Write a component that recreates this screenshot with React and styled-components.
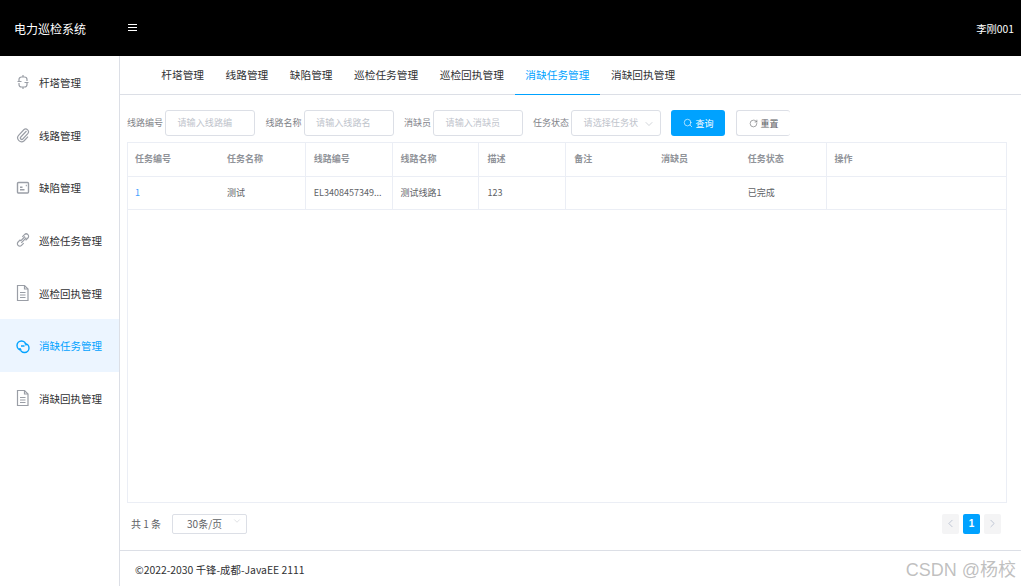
import React from 'react'
import styled, { createGlobalStyle } from 'styled-components'
import { Search, RotateCw, ChevronDown, ChevronLeft, ChevronRight } from 'lucide-react'

const menus = ['杆塔管理', '线路管理', '缺陷管理', '巡检任务管理', '巡检回执管理', '消缺任务管理', '消缺回执管理']
const columns = ['任务编号', '任务名称', '线路编号', '线路名称', '描述', '备注', '消缺员', '任务状态', '操作']
const row = ['1', '测试', 'EL3408457349...', '测试线路1', '123', '', '', '已完成', '']
const dividers = [false, true, true, true, true, false, false, true, false]

function MenuIcon({ index, color }) {
  const props = { width: 14, height: 18, viewBox: '0 0 14 18', fill: 'none', stroke: color, strokeWidth: 1.2 }
  if (index === 0) {
    return (
      <svg {...props}>
        <path d="M7 2v2M3 8V6.500A2.500 2.500 0 0 1 5.500 4h3A2.500 2.500 0 0 1 11 6.500V8M3 10v1.500A2.500 2.500 0 0 0 5.500 14h3a2.500 2.500 0 0 0 2.500-2.500V10M7 14v2M1.500 8.500h4M8.500 9.500h4" />
      </svg>
    )
  }
  if (index === 1) {
    return (
      <svg {...props}>
        <path d="M10.500 5 4.800 11a1.400 1.400 0 0 0 2 2l5-5.300a2.800 2.800 0 0 0-4-3.900L2.600 9.300a3.900 3.900 0 0 0 5.600 5.400l3.800-4" />
      </svg>
    )
  }
  if (index === 2) {
    return (
      <svg {...props} strokeWidth={1.4}>
        <rect x="1.500" y="3.500" width="11" height="10.500" rx="1" />
        <path d="M4 10.800h4.500M4 8.300h2.500M9.800 6.500h1" />
      </svg>
    )
  }
  if (index === 3) {
    return (
      <svg {...props}>
        <path d="M6.300 5.800 8.500 3.600a2.400 2.400 0 0 1 3.400 3.400L9.600 9.300M7.700 12.200l-2.200 2.200a2.400 2.400 0 0 1-3.400-3.400l2.300-2.300M5.300 11.900l5-5.200M4.500 10.200 9 5.500" />
      </svg>
    )
  }
  if (index === 5) {
    return (
      <svg width="14" height="18" viewBox="0 0 14 18" fill="none" stroke={color} strokeWidth="1.400">
        <path d="M5.500 13A4.500 4.500 0 1 1 10 8.500M8.500 6.500A4.500 4.500 0 1 1 4 11M5 9h3.500" />
      </svg>
    )
  }
  return (
    <svg {...props}>
      <path d="M1.500 1.500h7l3.500 3.500v11.500H1.500z" />
      <path d="M8.500 1.500V5H12M4 8.500h5.500M4 11h5.500M4 13.500h5.500" />
    </svg>
  )
}

function App() {
  return (
    <Page>
      <GlobalStyle />
      <Header>
        <Brand>电力巡检系统</Brand>
        <MenuToggle><i /><i /><i /></MenuToggle>
        <UserName>李刚001</UserName>
      </Header>
      <Body>
        <Sidebar>
          {menus.map((name, i) => (
            <MenuItem key={name} $active={i === 5}>
              <MenuIconBox><MenuIcon index={i} color={i === 5 ? '#00a2ff' : '#9a9ea6'} /></MenuIconBox>
              {name}
            </MenuItem>
          ))}
        </Sidebar>
        <Main>
          <Tabs>
            {menus.map((name, i) => (
              <Tab key={name} $active={i === 5}>{name}</Tab>
            ))}
          </Tabs>
          <Content>
            <FilterBar>
              <FieldLabel>线路编号</FieldLabel>
              <TextBox $gap={10.5}>请输入线路编</TextBox>
              <FieldLabel>线路名称</FieldLabel>
              <TextBox $gap={10.5}>请输入线路名</TextBox>
              <FieldLabel>消缺员</FieldLabel>
              <TextBox $gap={10}>请输入消缺员</TextBox>
              <FieldLabel>任务状态</FieldLabel>
              <TextBox $gap={10}>
                请选择任务状
                <SelectArrow><ChevronDown size={12} strokeWidth={1.2} /></SelectArrow>
              </TextBox>
              <PrimaryButton><Search size={10} strokeWidth={1.5} />查询</PrimaryButton>
              <ResetButton><RotateCw size={9} strokeWidth={1.5} />重置</ResetButton>
            </FilterBar>
            <Table>
              <TableRow $height={34}>
                {columns.map((name, i) => (
                  <HeadCell key={name} $divider={dividers[i]} $first={i === 0}>{name}</HeadCell>
                ))}
              </TableRow>
              <TableRow $height={33}>
                {row.map((value, i) => (
                  <BodyCell key={columns[i]} $divider={dividers[i]} $first={i === 0} $blue={i === 0}>{value}</BodyCell>
                ))}
              </TableRow>
            </Table>
            <Pagination>
              <Total>共 1 条</Total>
              <PageSize>
                30条/页
                <PageSizeArrow><ChevronDown size={10} strokeWidth={1} /></PageSizeArrow>
              </PageSize>
              <Pager>
                <PageArrow><ChevronLeft size={13} strokeWidth={1.3} /></PageArrow>
                <PageNumber>1</PageNumber>
                <PageArrow><ChevronRight size={13} strokeWidth={1.3} /></PageArrow>
              </Pager>
            </Pagination>
          </Content>
          <Footer>©2022-2030 千锋-成都-JavaEE 2111</Footer>
        </Main>
      </Body>
      <Watermark>CSDN @杨校</Watermark>
    </Page>
  )
}

export default App

const GlobalStyle = createGlobalStyle`
  html, body {
    margin: 0;
    padding: 0;
    background: #fff;
    font-family: "Noto Sans CJK SC", "Liberation Sans", sans-serif;
  }
  * {
    box-sizing: border-box;
  }
`

const Page = styled.div`
  position: relative;
  height: 586px;
  width: 1021px;
  display: flex;
  flex-direction: column;
  overflow: hidden;
`

const Header = styled.header`
  height: 56px;
  flex: none;
  background: #000;
  color: #fff;
  display: flex;
  align-items: center;
  padding: 0 7px 0 14px;
`

const Brand = styled.div`
  width: 114px;
  font-size: 12px;
`

const MenuToggle = styled.div`
  display: flex;
  flex-direction: column;
  gap: 2px;
  margin-bottom: 1px;
  i {
    display: block;
    width: 9px;
    height: 1px;
    background: #fff;
  }
`

const UserName = styled.div`
  margin-left: auto;
  font-size: 10.3px;
`

const Body = styled.div`
  flex: 1;
  display: flex;
  min-height: 0;
`

const Sidebar = styled.nav`
  width: 120px;
  flex: none;
  border-right: 1px solid #dcdfe6;
`

const MenuItem = styled.div`
  height: 52.7px;
  display: flex;
  align-items: center;
  padding-left: 16px;
  font-size: 10.5px;
  color: ${props => (props.$active ? '#00a2ff' : '#303133')};
  background: ${props => (props.$active ? '#ecf5ff' : 'transparent')};
`

const MenuIconBox = styled.span`
  width: 23px;
  display: flex;
  align-items: center;
`

const Main = styled.main`
  flex: 1;
  min-width: 0;
  display: flex;
  flex-direction: column;
`

const Tabs = styled.div`
  height: 39px;
  flex: none;
  display: flex;
  padding-left: 30.5px;
  border-bottom: 1px solid #dcdfe6;
`

const Tab = styled.div`
  height: 39px;
  padding: 0 10.75px;
  line-height: 38px;
  font-size: 10.7px;
  white-space: nowrap;
  color: ${props => (props.$active ? '#00a2ff' : '#303133')};
  border-bottom: 1px solid ${props => (props.$active ? '#00a2ff' : 'transparent')};
`

const Content = styled.div`
  flex: 1;
  min-height: 0;
  display: flex;
  flex-direction: column;
  padding: 15px 14px 0 7px;
`

const FilterBar = styled.div`
  height: 26px;
  flex: none;
  display: flex;
  align-items: center;
  margin-bottom: 6px;
`

const FieldLabel = styled.span`
  font-size: 9px;
  color: #7f8389;
  white-space: nowrap;
  margin: 0 2px 2px 0;
`

const TextBox = styled.div`
  width: 90px;
  height: 26px;
  flex: none;
  position: relative;
  border: 1px solid #dcdfe6;
  border-radius: 3px;
  padding-left: 11.5px;
  margin-right: ${props => props.$gap}px;
  font-size: 9.1px;
  line-height: 23px;
  color: #c0c4cc;
  white-space: nowrap;
`

const SelectArrow = styled.span`
  position: absolute;
  right: 5px;
  top: 7px;
  display: flex;
  color: #b4b8c0;
`

const PrimaryButton = styled.div`
  width: 54px;
  height: 26px;
  flex: none;
  background: #00a2ff;
  color: #fff;
  border-radius: 3px;
  font-size: 9px;
  display: flex;
  align-items: center;
  justify-content: center;
  gap: 3px;
  margin-right: 11px;
`

const ResetButton = styled(PrimaryButton)`
  background: #fff;
  color: #606266;
  border: 1px solid #dcdfe6;
  border-right: none;
  margin-right: 0;
`

const Table = styled.div`
  flex: 1;
  min-height: 0;
  border: 1px solid #ebeef5;
`

const TableRow = styled.div`
  height: ${props => props.$height}px;
  display: grid;
  grid-template-columns: 91px repeat(7, 86.8px) 1fr;
  border-bottom: 1px solid #ebeef5;
`

const HeadCell = styled.div`
  display: flex;
  align-items: center;
  padding: 0 0 2px ${props => (props.$first ? 7 : 8)}px;
  font-size: 9px;
  font-weight: 700;
  color: #909399;
  border-right: 1px solid ${props => (props.$divider ? '#ebeef5' : 'transparent')};
`

const BodyCell = styled(HeadCell)`
  font-weight: 400;
  color: ${props => (props.$blue ? '#409eff' : '#606266')};
  white-space: nowrap;
  overflow: hidden;
`

const Pagination = styled.div`
  height: 47px;
  flex: none;
  display: flex;
  align-items: center;
  padding: 0 6px 6px 4px;
`

const Total = styled.span`
  font-size: 10px;
  color: #606266;
  margin-right: 11px;
`

const PageSize = styled.div`
  width: 75px;
  height: 20px;
  position: relative;
  border: 1px solid #dcdfe6;
  border-radius: 2px;
  font-size: 10px;
  line-height: 17px;
  color: #606266;
  padding-left: 14px;
`

const PageSizeArrow = styled.span`
  position: absolute;
  right: 4px;
  top: 1px;
  display: flex;
  color: #b4b8c0;
`

const Pager = styled.div`
  margin-left: auto;
  display: flex;
  gap: 4px;
`

const PageArrow = styled.div`
  width: 17px;
  height: 20px;
  background: #f4f4f5;
  border-radius: 2px;
  display: flex;
  align-items: center;
  justify-content: center;
  color: #a9b4c8;
`

const PageNumber = styled(PageArrow)`
  background: #00a2ff;
  color: #fff;
  font-family: "Liberation Sans", sans-serif;
  font-size: 10px;
  font-weight: 700;
`

const Footer = styled.footer`
  height: 36px;
  flex: none;
  border-top: 1px solid #dcdfe6;
  padding: 2px 0 0 15px;
  display: flex;
  align-items: center;
  font-size: 10.4px;
  color: #303133;
`

const Watermark = styled.div`
  position: absolute;
  right: 5px;
  bottom: 5px;
  font-family: "Liberation Sans", "Noto Sans CJK SC", sans-serif;
  font-size: 18px;
  color: rgba(150, 150, 150, 0.6);
`
